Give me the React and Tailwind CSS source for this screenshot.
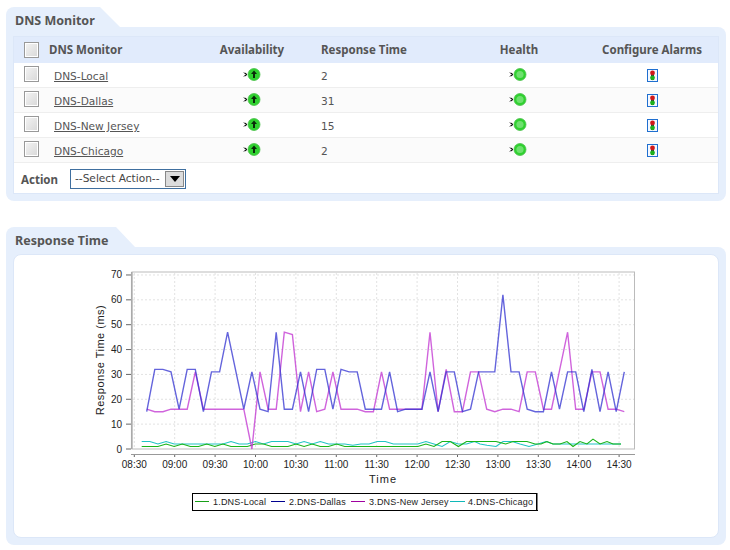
import React from 'react';

const monitors = ['DNS-Local', 'DNS-Dallas', 'DNS-New Jersey', 'DNS-Chicago'];
const times = [2, 31, 15, 2];

const font = { fontFamily: '"DejaVu Sans", sans-serif' };
const boldFont = { fontFamily: '"Noto Sans", sans-serif' };

const dallas = [15,32,32,31,16,32,32,15,31,31,47,31.5,16,31,16,15,47,16,16,31,15,32,32,16,32,31,31,16,16,16,31,15,16,16,16,31,15,31,31,15,16,31,31,31,62,31,31,16,15,15,31,16,31,31,15,32,15,31,15,31];
const jersey = [16,15,15,16,16,16,31,16,16,16,16,16,16,0,31,16,16,47,46,15,31,15,16,31,16,16,16,15,15,31,16,16,16,16,16,47,15,32,15,15,31,31,16,15,16,16,15,31,31,16,16,31.5,47,16,16,31,31,16,16,15];
const localHead = [1,1,1,2,1,2,1,1,2,1,2,1,1,1,2,2,1,1,1,2,1,2,1,1,2,1,1,1,1,1,1,1,1,1,1,2,1,3,3,1,3,3];
const localTail = [[480,3],[496,3],[505.7,2],[513,3],[520,3],[527,3],[535,2],[541,2],[547,3],[553,2],[560,2],[567,3],[573,1],[580,3],[587,2],[593,4],[600,2],[607,3],[613,2],[621,2]];
const chicagoHead = [3,3,2,3,2,2,2,2,2,2,2,3,2,2,3,2,3,3,3,2,3,2,3,2,2,2,1.5,2,2,3,3,2,2,2,2,3,2,1,3,2,2,3];
const chicagoTail = [[480,2],[487,1.5],[496,1],[503,3],[512,3],[520,2],[529,1],[538,2],[546,3],[553,2],[621,2]];

const yOf = (v) => 449 - v * 2.486;
const hourLabels = ['08:30','09:00','09:30','10:00','10:30','11:00','11:30','12:00','12:30','13:00','13:30','14:00','14:30'];

const mainLine = (data) => data.map((v, i) => `${(146.7 + 8.095 * i).toFixed(1)},${yOf(v).toFixed(1)}`).join(' ');
const lowLine = (head, tail) =>
  head.map((v, i) => `${(141.7 + 8.12 * i).toFixed(1)},${yOf(v).toFixed(1)}`)
    .concat(tail.map(([x, v]) => `${x},${yOf(v).toFixed(1)}`))
    .join(' ');

function Checkbox() {
  return <div className="w-[15px] h-[16px] mb-[1px] border border-[#999] bg-gradient-to-br from-[#f4f4f4] to-[#d8d8d8] shadow-[inset_0_0_0_1px_#fff]" />;
}

function StatusIcon({ arrow }) {
  return (
    <svg width="18" height="14" viewBox="0 0 18 14">
      <path d="M1 4.5 L3 6.5 L1 8.5 M2 5 L4 6.5 L2 8" fill="none" stroke="#000" strokeWidth="1" />
      <circle cx="11" cy="6.5" r="6" fill="#2fd12f" stroke="#4cc04c" strokeWidth="0.8" />
      {arrow ? (
        <path d="M11 2.5 L14 6 L12 6 L12 10 L10 10 L10 6 L8 6 Z" fill="#0a2a0a" />
      ) : (
        <circle cx="11" cy="6.5" r="3.6" fill="#6fe06f" />
      )}
    </svg>
  );
}

function AlarmIcon() {
  return (
    <svg width="11" height="13" viewBox="0 0 11 13">
      <rect x="0.5" y="0.5" width="10" height="12" fill="#f4f8ff" stroke="#1f6fd0" />
      <rect x="4" y="2" width="3" height="9" fill="#333" />
      <circle cx="5.5" cy="3.9" r="2.4" fill="#d01818" />
      <circle cx="5.5" cy="8.8" r="2.4" fill="#1cb01c" />
    </svg>
  );
}

function Panel({ title, tabClass, children }) {
  return (
    <section>
      <div
        className={`h-[20px] pl-[9px] bg-[#e6effc] rounded-tl-lg text-[12.5px] leading-[28px] font-bold text-[#555] ${tabClass}`}
        style={boldFont}
      >
        {title}
      </div>
      <div className="bg-[#e6effc] rounded-b-lg rounded-tr-lg p-[7px]">{children}</div>
    </section>
  );
}

function Chart() {
  const labelFont = { fontFamily: '"Liberation Sans", sans-serif', fontSize: 10 };
  return (
    <svg width="580" height="262" viewBox="80 262 580 262" className="block" style={labelFont}>
      <rect x="132" y="272" width="502.5" height="177" fill="#fff" stroke="#bbb" />
      <line x1="131.7" y1="272" x2="131.7" y2="449" stroke="#aaa" strokeWidth="1.5" />
      {[0, 10, 20, 30, 40, 50, 60, 70].map((v) => (
        <g key={v}>
          {v > 0 && <line x1="133" x2="634" y1={yOf(v)} y2={yOf(v)} stroke="#e2e2e2" strokeDasharray="2 2" />}
          <line x1="126" x2="131" y1={yOf(v)} y2={yOf(v)} stroke="#666" />
          <text x="122" y={yOf(v) + 3.5} textAnchor="end" fill="#222">{v}</text>
        </g>
      ))}
      {hourLabels.map((t, k) => {
        const x = 134.3 + 40.4 * k;
        return (
          <g key={t}>
            <line x1={x} x2={x} y1="273" y2="449" stroke="#e2e2e2" strokeDasharray="2 2" />
            <line x1={x} x2={x} y1="454" y2="457" stroke="#666" />
            <text x={x} y="468" textAnchor="middle" fill="#222">{t}</text>
          </g>
        );
      })}
      <line x1="131" x2="635" y1="454.5" y2="454.5" stroke="#999" />
      <text x="383" y="483" textAnchor="middle" fill="#222" fontSize="11" letterSpacing="1">Time</text>
      <text transform="translate(104 360) rotate(-90)" textAnchor="middle" fill="#222" fontSize="11" letterSpacing="0.5">Response Time (ms)</text>

      <polyline points={lowLine(chicagoHead, chicagoTail)} fill="none" stroke="#20c4c4" strokeWidth="1.1" />
      <polyline points={lowLine(localHead, localTail)} fill="none" stroke="#18b418" strokeWidth="1.1" />
      <polyline points={mainLine(jersey)} fill="none" stroke="#c030d0" strokeWidth="1.4" strokeOpacity="0.75" />
      <polyline points={mainLine(dallas)} fill="none" stroke="#3030d0" strokeWidth="1.4" strokeOpacity="0.75" />

      <rect x="192.5" y="493.5" width="344" height="17" fill="#fff" stroke="#000" />
      <line x1="537" y1="493" x2="537" y2="511" stroke="#000" />
      <line x1="192" y1="510.5" x2="538" y2="510.5" stroke="#000" />
      <g fontSize="9" fill="#222" letterSpacing="0.2">
        <line x1="195" x2="209" y1="501.5" y2="501.5" stroke="#18a018" />
        <text x="213" y="505">1.DNS-Local</text>
        <line x1="271" x2="285" y1="501.5" y2="501.5" stroke="#000090" />
        <text x="289" y="505">2.DNS-Dallas</text>
        <line x1="351" x2="365" y1="501.5" y2="501.5" stroke="#a000a0" />
        <text x="369" y="505">3.DNS-New Jersey</text>
        <line x1="450" x2="465" y1="501.5" y2="501.5" stroke="#10b8b8" />
        <text x="468" y="505">4.DNS-Chicago</text>
      </g>
    </svg>
  );
}

export default function App() {
  return (
    <div className="w-[730px] h-[550px] bg-white overflow-hidden pt-[7px] pl-[6px] pr-[4px]" style={font}>
      <Panel title="DNS Monitor" tabClass="w-[114px] [clip-path:polygon(0_0,94px_0,114px_100%,0_100%)]">
        <div className="bg-white border border-[#dce7f8] mt-[2px] text-[10.6px] text-[#555]">
          <div
            className="grid grid-cols-[173px_130px_135px_134px_1fr] items-center h-[26px] bg-[#e1ebfc] font-bold text-[11.5px]"
            style={boldFont}
          >
            <div className="flex items-center pl-[10px] gap-[10px]">
              <Checkbox />
              <span>DNS Monitor</span>
            </div>
            <div className="text-center">Availability</div>
            <div className="pl-[4px]">Response Time</div>
            <div className="text-center">Health</div>
            <div className="text-center">Configure Alarms</div>
          </div>
          {monitors.map((name, i) => (
            <div
              key={name}
              className={`grid grid-cols-[173px_130px_135px_134px_1fr] items-center h-[25px] border-b border-[#eeeeee] ${i % 2 ? 'bg-[#fbfbfb]' : 'bg-white'}`}
            >
              <div className="flex items-center pl-[10px] gap-[15px]">
                <Checkbox />
                <a className="underline text-[#555] mt-[4px]">{name}</a>
              </div>
              <div className="flex justify-center pb-[1px]"><StatusIcon arrow /></div>
              <div className="pl-[4px] pt-[3px]">{times[i]}</div>
              <div className="flex justify-center pb-[1px] pr-[2px]"><StatusIcon /></div>
              <div className="flex justify-center pt-[1px]"><AlarmIcon /></div>
            </div>
          ))}
          <div className="flex items-center h-[30px] pl-[7px] pt-[2px]">
            <span className="font-bold text-[11.5px] w-[49px] pt-[2px]" style={boldFont}>Action</span>
            <div className="flex items-center justify-between w-[116px] h-[20px] border border-[#3f6f9f] pl-[4px] pr-[1px]">
              <span className="text-[#444]">--Select Action--</span>
              <div className="flex items-center justify-center w-[19px] h-[16px] bg-[#dcdcdc] border border-[#888]">
                <div className="w-0 h-0 border-x-[5px] border-x-transparent border-t-[6px] border-t-black" />
              </div>
            </div>
          </div>
        </div>
      </Panel>

      <div className="h-[26px]" />

      <Panel title="Response Time" tabClass="w-[129px] [clip-path:polygon(0_0,110px_0,129px_100%,0_100%)]">
        <div className="bg-white border border-[#dce7f8] rounded-lg h-[284px] flex justify-start pl-[66px] pt-[7px]">
          <Chart />
        </div>
      </Panel>
    </div>
  );
}
